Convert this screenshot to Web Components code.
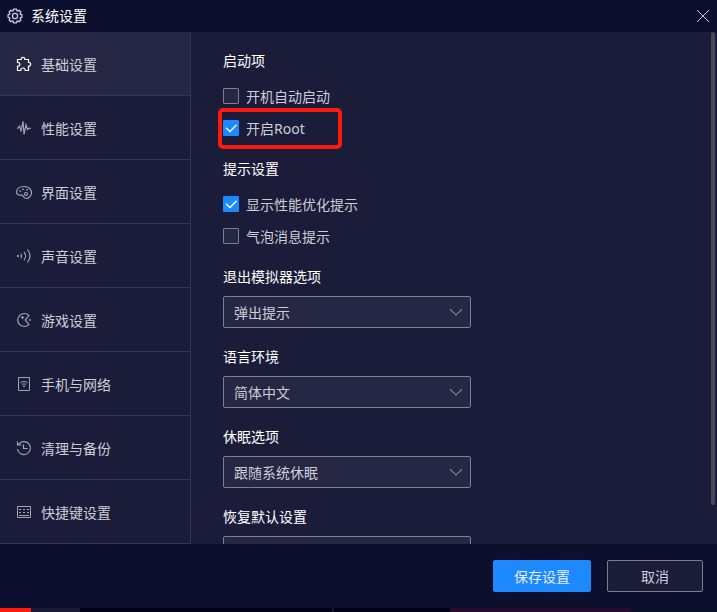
<!DOCTYPE html>
<html lang="zh-CN">
<head>
<meta charset="utf-8">
<title>系统设置</title>
<style>
  :root {
    --bar: #0c0f2e;
    --panel: #1a1c3a;
    --field: #252744;
    --line: #36354f;
    --edge: #7d7e8e;
    --text: #cdced6;
    --accent: #1e88ff;
  }

  body {
    background: var(--panel);
    color: var(--text);
    font: 14px/22px "Noto Sans", "Noto Sans CJK SC", sans-serif;
    margin: 0;
  }
</style>
</head>
<body>

<settings-window>
  <title-bar slot="title" label="系统设置"></title-bar>

  <side-nav slot="nav">
    <nav-item icon="puzzle" label="基础设置" selected></nav-item>
    <nav-item icon="pulse" label="性能设置"></nav-item>
    <nav-item icon="palette" label="界面设置"></nav-item>
    <nav-item icon="sound" label="声音设置"></nav-item>
    <nav-item icon="game" label="游戏设置"></nav-item>
    <nav-item icon="phone" label="手机与网络"></nav-item>
    <nav-item icon="history" label="清理与备份"></nav-item>
    <nav-item icon="keyboard" label="快捷键设置"></nav-item>
  </side-nav>

  <scroll-panel>
    <setting-group label="启动项" compact>
      <check-option label="开机自动启动"></check-option>
      <check-option label="开启Root" checked marked></check-option>
    </setting-group>
    <setting-group label="提示设置" compact>
      <check-option label="显示性能优化提示" checked></check-option>
      <check-option label="气泡消息提示"></check-option>
    </setting-group>
    <setting-group label="退出模拟器选项">
      <drop-down label="退出模拟器选项" options="弹出提示"></drop-down>
    </setting-group>
    <setting-group label="语言环境">
      <drop-down label="语言环境" options="简体中文"></drop-down>
    </setting-group>
    <setting-group label="休眠选项">
      <drop-down label="休眠选项" options="跟随系统休眠"></drop-down>
    </setting-group>
    <setting-group label="恢复默认设置">
      <drop-down label="恢复默认设置" options=""></drop-down>
    </setting-group>
  </scroll-panel>

  <action-button slot="actions" primary>保存设置</action-button>
  <action-button slot="actions">取消</action-button>
</settings-window>

<script>
const ICONS = {
  gear: `<path stroke-width="1.3" d="M6.6 1.2h2.8l.5 1.5.7.3 1.5-.7 1.7 1.7-.7 1.5.3.7 1.5.5v2.6l-1.5.5-.3.8.7 1.4-1.7 1.7-1.5-.7-.7.3-.5 1.5H6.6l-.5-1.5-.7-.3-1.5.7L2.2 12l.7-1.4-.3-.8-1.5-.5V6.7l1.5-.5.3-.7L2.2 4l1.7-1.7 1.5.7.7-.3z"/><circle cx="8" cy="8" r="2.6" stroke-width="1.3"/>`,
  puzzle: `<path stroke-width="1.2" d="M1.5 3.5h3.7c-.2-1.4.6-2.2 1.8-2.2s2 .8 1.8 2.2h3.7v3c1.3-.2 2.2.6 2.2 1.8s-.9 2-2.2 1.8v4.4H9.2c.1-1.7-.8-2.5-2.2-2.5s-2.3.8-2.2 2.5H1.5v-4.2c1.6 0 2.3-.8 2.3-2s-.7-2-2.3-2z"/>`,
  pulse: `<path stroke-width="1.2" d="M1 8.5l1-.5 1.5-2L5 11.3 7 1.3l1 13 2-9.6 1.5 4.8 1-1.2h2.3"/>`,
  palette: `<path stroke-width="1.2" d="M8 2.5c4.4 0 7.5 2.5 7.5 6 0 3.3-2.8 6-5.3 6-2.2 0-2.6-1.2-3.2-2.6-.4-1-1.2-.9-2.5-.8C2.2 11.2.6 10.2.6 8 .6 4.8 3.6 2.5 8 2.5z"/><circle cx="10" cy="10" r="1.5" stroke-width="1.2"/><path d="M3.5 7h1.5M6.2 5.2h1.5M10.2 5.8h1.5" stroke-width="1.5"/>`,
  sound: `<path d="M1 8h1.8" stroke-width="1.8"/><path stroke-width="1.2" d="M4.7 5.8c1 1.4 1 3 0 4.4M8 3.8c1.9 2.4 1.9 6 0 8.4M11.5 1.5c3 4 3 9 0 13"/>`,
  game: `<path stroke-width="1.2" d="M13 3.6A6.5 6.5 0 1 0 13 12.4L9.2 8z"/><path d="M6.5 3.8v3.4M4.8 5.5h3.4"/><path d="M13.2 8h1.7" stroke-width="1.7"/>`,
  phone: `<path d="M2.5 1.5h11v13h-11z"/><path d="M4.3 7c2.2-2 5.2-2 7.4 0M6 8.6c1.2-1.1 2.8-1.1 4 0"/><path d="M7.2 10.2h1.6" stroke-width="1.6"/>`,
  history: `<path stroke-width="1.2" d="M2.5 4.5a6.5 6.5 0 1 1-1 4.5M1.5 1.5v3.5h3.8M7.5 4.5v4h4.2"/>`,
  keyboard: `<path d="M1.5 2.5h13v11h-13z"/><path d="M3 5.5h2m2 0h2m2 0h2M3 8.5h2m2 0h2m2 0h2M3 11.5h10"/>`,
  close: `<path d="M2 2l12 12M14 2L2 14"/>`,
  chevron: `<path stroke-width="1.2" d="M2 5.2l6 5.8 6-5.8"/>`,
  tick: `<path stroke-width="1.3" d="M3 7.8l4 3.7 6.5-6.7"/>`
};

function icon( name ) {
  return `<svg width="16" height="16" viewBox="0 0 16 16" fill="none" stroke="currentColor" aria-hidden="true">${ICONS[name]}</svg>`;
}

// Attach a shadow root holding the given markup
function render( element, html ) {
  const template = document.createElement( 'template' );
  template.innerHTML = html;
  const root = element.attachShadow( {mode: 'open'} );
  root.appendChild( template.content.cloneNode( true ) );
  return root;
}

class SettingsWindow extends HTMLElement {
  constructor() {
    super();
    render( this, `
      <style>
        :host {
          display: flex;
          flex-direction: column;
          height: 100vh;
          overflow: hidden;
        }

        main {
          display: grid;
          flex: 1;
          grid-template-columns: 191px 1fr;
          min-height: 0;
        }

        footer {
          background: var(--bar);
          display: flex;
          gap: 16px;
          justify-content: flex-end;
          padding: 16px 14px;
        }

        /* Sliver of the desktop below the window */
        .desktop {
          background: #02011a;
          display: grid;
          grid-template-columns: 31fr 49fr 252fr 2fr 116fr 181fr 86fr;
          height: 4px;
        }

        .red { background: #fb1b0c; }
        .slate { background: #1a1a36; }
        .seam { background: #15183f; }
        .wine { background: #270b2e; }
        .navy { background: #0a0f2a; }
      </style>
      <slot name="title"></slot>
      <main>
        <slot name="nav"></slot>
        <slot></slot>
      </main>
      <footer><slot name="actions"></slot></footer>
      <div class="desktop">
        <i class="red"></i><i class="slate"></i><i></i><i class="seam"></i><i></i><i class="wine"></i><i class="navy"></i>
      </div>
    ` );
  }
}

class TitleBar extends HTMLElement {
  constructor() {
    super();
    render( this, `
      <style>
        :host {
          align-items: center;
          background: var(--bar);
          box-sizing: border-box;
          color: #ffffff;
          display: flex;
          gap: 8px;
          height: 32px;
          padding: 0 6px 0 7px;
        }

        svg {
          color: var(--text);
          display: block;
        }

        h1 {
          flex: 1;
          font: inherit;
          margin: 0;
        }

        button {
          background: none;
          border: none;
          cursor: pointer;
          padding: 0;
        }
      </style>
      ${icon( 'gear' )}
      <h1>${this.getAttribute( 'label' )}</h1>
      <button type="button" aria-label="关闭">${icon( 'close' )}</button>
    ` );
  }
}

class SideNav extends HTMLElement {
  constructor() {
    super();
    render( this, `
      <style>
        :host {
          border-right: 1px solid var(--line);
          display: block;
        }
      </style>
      <nav><slot></slot></nav>
    ` );
  }
}

class NavItem extends HTMLElement {
  constructor() {
    super();
    render( this, `
      <style>
        :host {
          display: block;
        }

        a {
          align-items: center;
          border-bottom: 1px solid var(--line);
          box-sizing: border-box;
          color: inherit;
          display: flex;
          gap: 9px;
          height: 64px;
          padding: 1px 16px 0;
          text-decoration: none;
        }

        span {
          padding-top: 2px;
        }

        svg {
          color: #a3a4b1;
        }

        :host( [selected] ) a {
          background: var(--field);
        }

        :host( [selected] ) svg {
          color: #ffffff;
        }
      </style>
      <a href="#">${icon( this.getAttribute( 'icon' ) )}<span>${this.getAttribute( 'label' )}</span></a>
    ` );
  }
}

class ScrollPanel extends HTMLElement {
  constructor() {
    super();
    const root = render( this, `
      <style>
        :host {
          display: block;
          min-height: 0;
          position: relative;
        }

        .view {
          box-sizing: border-box;
          height: 100%;
          overflow-y: auto;
          padding: 18px 32px 0;
          scrollbar-width: none;
        }

        .thumb {
          background: #484859;
          border-radius: 2px;
          position: absolute;
          right: 2px;
          top: 0;
          width: 4px;
        }
      </style>
      <div class="view"><slot></slot></div>
      <div class="thumb"></div>
    ` );
    this.$view = root.querySelector( '.view' );
    this.$thumb = root.querySelector( '.thumb' );
  }

  connectedCallback() {
    this.$view.addEventListener( 'scroll', () => this._update() );
    new ResizeObserver( () => this._update() ).observe( this.$view );
  }

  // Size and place the thumb for the current scroll position
  _update() {
    const { clientHeight, scrollHeight, scrollTop } = this.$view;
    const ratio = clientHeight / scrollHeight;
    this.$thumb.hidden = ratio >= 1;
    this.$thumb.style.height = `${Math.round( clientHeight * ratio )}px`;
    this.$thumb.style.top = `${Math.round( scrollTop * ratio )}px`;
  }
}

class SettingGroup extends HTMLElement {
  constructor() {
    super();
    render( this, `
      <style>
        :host {
          display: block;
          padding-bottom: 18px;
        }

        :host( [compact] ) {
          padding-bottom: 14px;
        }

        h2 {
          color: #ffffff;
          font: inherit;
          margin: 0 0 8px;
        }
      </style>
      <h2>${this.getAttribute( 'label' )}</h2>
      <slot></slot>
    ` );
  }
}

class CheckOption extends HTMLElement {
  constructor() {
    super();
    render( this, `
      <style>
        :host {
          display: block;
          position: relative;
        }

        label {
          align-items: center;
          display: flex;
          gap: 7px;
          height: 32px;
        }

        .box {
          display: grid;
        }

        .text {
          padding-top: 2px;
        }

        input, svg {
          grid-area: 1 / 1;
        }

        input {
          appearance: none;
          background: var(--field);
          border: 1px solid var(--edge);
          border-radius: 1px;
          box-sizing: border-box;
          height: 16px;
          margin: 0;
          width: 16px;
        }

        input:checked {
          background: var(--accent);
          border-color: var(--accent);
        }

        svg {
          color: #ffffff;
          pointer-events: none;
          visibility: hidden;
        }

        input:checked + svg {
          visibility: visible;
        }

        /* Red frame drawn over the option */
        :host( [marked] )::after {
          border: 4px solid #fb1b0c;
          border-radius: 5px;
          box-sizing: border-box;
          content: '';
          height: 41px;
          left: -5px;
          pointer-events: none;
          position: absolute;
          top: -4px;
          width: 124px;
        }
      </style>
      <label>
        <span class="box">
          <input type="checkbox" ${this.hasAttribute( 'checked' ) ? 'checked' : ''}>
          ${icon( 'tick' )}
        </span>
        <span class="text">${this.getAttribute( 'label' )}</span>
      </label>
    ` );
  }
}

class DropDown extends HTMLElement {
  constructor() {
    super();
    const options = this.getAttribute( 'options' ).split( ',' );
    render( this, `
      <style>
        :host {
          align-items: center;
          display: grid;
          max-width: 248px;
        }

        select, svg {
          grid-area: 1 / 1;
        }

        select {
          appearance: none;
          background: var(--field);
          border: 1px solid var(--edge);
          border-radius: 2px;
          color: inherit;
          font: inherit;
          height: 32px;
          padding: 2px 32px 0 10px;
          width: 100%;
        }

        svg {
          color: var(--edge);
          justify-self: end;
          margin-right: 7px;
          pointer-events: none;
        }
      </style>
      <select aria-label="${this.getAttribute( 'label' )}">
        ${options.map( ( option ) => `<option>${option}</option>` ).join( '' )}
      </select>
      ${icon( 'chevron' )}
    ` );
  }
}

class ActionButton extends HTMLElement {
  constructor() {
    super();
    render( this, `
      <style>
        :host {
          display: block;
        }

        button {
          background: var(--panel);
          border: 1px solid var(--edge);
          border-radius: 2px;
          box-sizing: border-box;
          color: inherit;
          cursor: pointer;
          display: block;
          font: inherit;
          height: 32px;
          min-width: 96px;
          padding: 2px 20px 0;
        }

        :host( [primary] ) button {
          background: var(--accent);
          border-color: var(--accent);
          color: #e0efff;
        }
      </style>
      <button type="button"><slot></slot></button>
    ` );
  }
}

window.customElements.define( 'settings-window', SettingsWindow );
window.customElements.define( 'title-bar', TitleBar );
window.customElements.define( 'side-nav', SideNav );
window.customElements.define( 'nav-item', NavItem );
window.customElements.define( 'scroll-panel', ScrollPanel );
window.customElements.define( 'setting-group', SettingGroup );
window.customElements.define( 'check-option', CheckOption );
window.customElements.define( 'drop-down', DropDown );
window.customElements.define( 'action-button', ActionButton );
</script>
</body>
</html>
